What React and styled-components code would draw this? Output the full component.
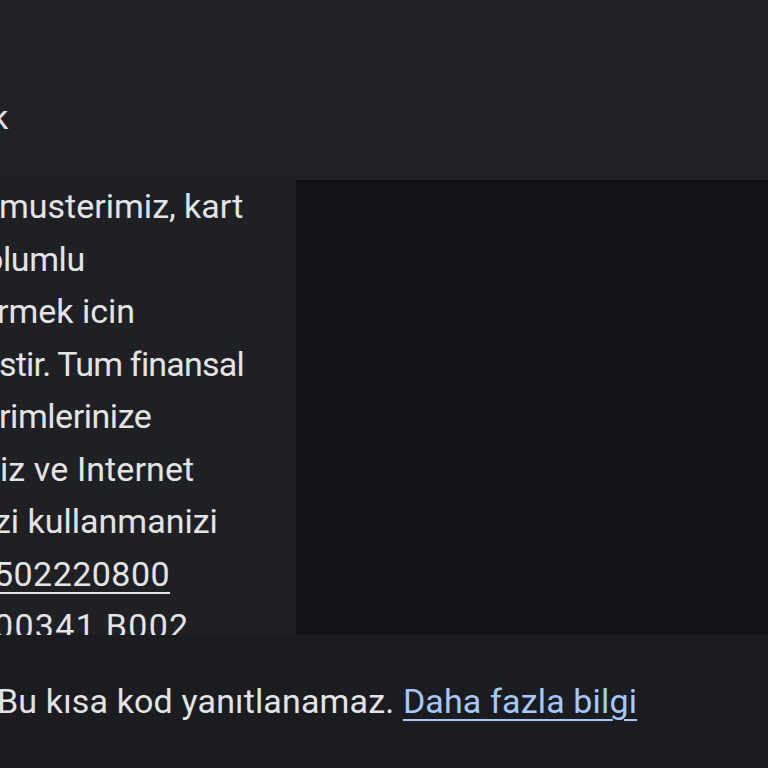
import React from "react";
import styled, { createGlobalStyle } from "styled-components";

const GlobalStyle = createGlobalStyle`
  html, body {
    margin: 0;
    padding: 0;
    background: #202125;
  }
  body {
    font-family: Roboto, "Noto Sans", "Liberation Sans", sans-serif;
    -webkit-font-smoothing: antialiased;
  }
`;

// visible tail of each wrapped line of the SMS; shift/track tune where the
// crop cuts the line and how wide it runs
const lines = [
  { text: "musterimiz, kart", shift: -1, track: 0 },
  { text: "olumlu", shift: -16, track: -0.4 },
  { text: "rmek icin", shift: -3, track: 0 },
  { text: "stir. Tum finansal", shift: -1, track: -0.8 },
  { text: "rimlerinize", shift: -1, track: -0.45 },
  { text: "iz ve Internet", shift: 0, track: 0.1 },
  { text: "zi kullanmanizi", shift: -6, track: 0 },
  { text: "502220800", shift: -6, track: 0.45, link: true },
  { text: "00341 B002", shift: -6, track: 1.3 },
  { text: "Bilgi icin 0850 222 0800", shift: 0, track: 0 },
];

export default function App() {
  return (
    <>
      <GlobalStyle />
      <Screen>
        <Header>
          <Title>k</Title>
        </Header>
        <Thread>
          <Bubble>
            {lines.map((line, i) => (
              <Line key={i} shift={line.shift} track={line.track}>
                {line.link ? <Phone>{line.text}</Phone> : line.text}
              </Line>
            ))}
          </Bubble>
          <Shade />
        </Thread>
        <Footer>
          <Notice>
            Bu kısa kod yanıtlanamaz. <MoreLink href="#">Daha fazla bilgi</MoreLink>
          </Notice>
        </Footer>
      </Screen>
    </>
  );
}

const Screen = styled.div`
  width: 768px;
  height: 768px;
  overflow: hidden;
  display: flex;
  flex-direction: column;
  background: #202125;
  color: #e4e4e6;
  font-size: 34px;
  line-height: 52.5px;
`;

const Header = styled.header`
  height: 180px;
  padding-top: 91px;
  box-sizing: border-box;
`;

const Title = styled.div`
  margin-left: -9px;
  white-space: nowrap;
`;

const Thread = styled.div`
  height: 455px;
  display: flex;
`;

const Bubble = styled.div`
  width: 296px;
  flex: none;
  background: #1f2024;
  overflow: hidden;
`;

const Line = styled.div`
  white-space: nowrap;
  margin-left: ${props => props.shift}px;
  letter-spacing: ${props => props.track}px;
`;

const Phone = styled.span`
  text-decoration: underline;
  text-decoration-thickness: 2px;
  text-underline-offset: 6px;
`;

const Shade = styled.div`
  flex: 1;
  background: #141519;
  box-shadow: inset 0 2px 2px rgba(0, 0, 0, 0.25);
`;

const Footer = styled.footer`
  flex: 1;
  background: #1b1c20;
  padding-top: 40px;
`;

const Notice = styled.p`
  margin: 0 0 0 -3px;
  white-space: nowrap;
  letter-spacing: 0.15px;
`;

const MoreLink = styled.a`
  color: #a8c7fa;
  text-decoration: underline;
  text-decoration-thickness: 2px;
  text-underline-offset: 6px;
`;
